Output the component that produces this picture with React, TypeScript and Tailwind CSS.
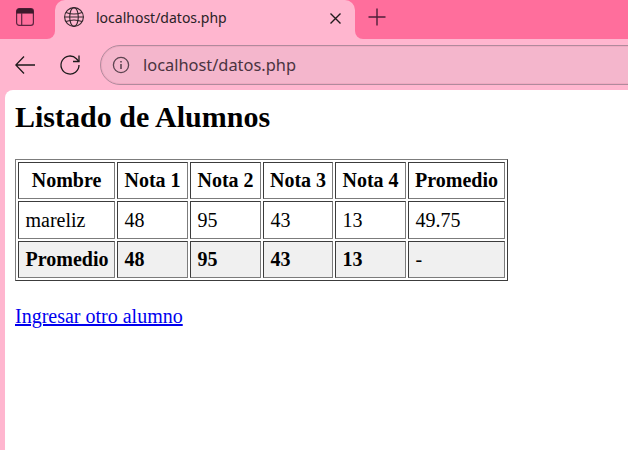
import React from "react";

const inset = "border border-[#7c7c7c] border-t-[#3c3c3c] border-l-[#3c3c3c]";

const Th = ({ w, children }: { w: string; children: React.ReactNode }) => (
  <th className={`${w} ${inset} p-0 text-center font-bold`}>{children}</th>
);

const rowCell = `${inset} px-[6.5px] py-0 text-left`;
const footCell = `${rowCell} bg-[#f0f0f0]`;

export default function App() {
  return (
    <div className="w-[628px] h-[450px] overflow-hidden bg-[#ffb6cf] flex flex-col font-['Liberation_Serif',serif]">
      {/* tab strip */}
      <div className="h-[39px] shrink-0 flex items-stretch">
        <div className="w-[55px] pr-[5px] pb-[5px] rounded-br-[8px] bg-[#ff6e9c] flex items-center justify-center">
          <svg width="18" height="18" viewBox="0 0 18 18" fill="none" stroke="#5e2540" strokeWidth="1.2">
            <rect x="0.6" y="0.6" width="16.8" height="16.8" rx="2.6" />
            <path d="M0.8 3.4a2.6 2.6 0 0 1 2.6-2.6h11.2a2.6 2.6 0 0 1 2.6 2.6v1.8H0.8z" fill="#3d1a2b" stroke="#3d1a2b" strokeWidth="0.6" />
            <path d="M5.7 5v12.4" />
          </svg>
        </div>
        <div className="w-[300px] bg-[#ff6e9c]">
          <div className="h-full bg-[#ffb6cf] rounded-t-[10px] flex items-center pl-[9px] pr-[14px] pb-[5px]">
            <svg width="20" height="20" viewBox="0 0 20 20" fill="none" stroke="#33262c" strokeWidth="1.1">
              <circle cx="10" cy="10" r="9.4" />
              <ellipse cx="10" cy="10" rx="4.3" ry="9.4" />
              <path d="M2 5.4c4.6 1.9 11.4 1.9 16 0M2 14.6c4.6-1.9 11.4-1.9 16 0M0.6 10h18.8" />
            </svg>
            <span className="ml-[12px] flex-1 text-[14px] text-[#2a2226] font-['Noto_Sans',sans-serif]">localhost/datos.php</span>
            <svg width="11" height="11" viewBox="0 0 11 11" stroke="#1f1a1c" strokeWidth="1.4" fill="none" className="mt-[3px]">
              <path d="M0.5 0.5l10 10M10.5 0.5l-10 10" />
            </svg>
          </div>
        </div>
        <div className="flex-1 rounded-bl-[8px] bg-[#ff6e9c] pl-[13px] pb-[5px] flex items-center">
          <svg width="18" height="18" viewBox="0 0 18 18" stroke="#4f1f38" strokeWidth="1.4" fill="none">
            <path d="M9 0.5v17M0.5 9h17" />
          </svg>
        </div>
      </div>
      {/* toolbar */}
      <div className="h-[51px] shrink-0 flex items-center">
        <div className="w-[50px] flex justify-center">
          <svg width="20" height="18" viewBox="0 0 20 18" stroke="#1d1a1b" strokeWidth="1.3" fill="none">
            <path d="M20 9H0.8M9 0.5L0.8 9 9 17.5" />
          </svg>
        </div>
        <div className="w-[40px] flex justify-center">
          <svg width="22" height="22" viewBox="0 0 22 22" stroke="#1d1a1b" strokeWidth="1.3" fill="none">
            <path d="M20 11a9 9 0 1 1-2.6-6.3L20 7.5" />
            <path d="M20 1.5v6h-6" />
          </svg>
        </div>
        <div className="ml-[10px] self-start mt-[6px] h-[40px] flex-1 -mr-[40px] rounded-full border border-[#b08a9c] bg-[#f4b6cc] flex items-center pl-[11px] shadow-[inset_0_0_0_1px_#efa9c1]">
          <svg width="18" height="18" viewBox="0 0 18 18" fill="none" stroke="#5c4450" strokeWidth="1.3">
            <circle cx="9" cy="9" r="7.6" />
            <path d="M9 8v5" strokeWidth="1.6" />
            <path d="M9 5v1.6" strokeWidth="1.6" />
          </svg>
          <span className="ml-[13px] text-[16.4px] text-[#4a3340] font-['Noto_Sans',sans-serif]">localhost/datos.php</span>
        </div>
      </div>
      {/* page */}
      <div className="flex-1 ml-[5px] bg-white rounded-tl-[8px] pl-[10px] text-black text-[20px] leading-[23px]">
        <h1 className="mt-[10px] text-[30px] leading-[34px] font-bold">Listado de Alumnos</h1>
        <table className="mt-[25px] table-fixed border-separate border-spacing-[2px] border border-[#3c3c3c] border-t-[#7c7c7c] border-l-[#7c7c7c] w-[493px]">
          <thead>
            <tr className="h-[37px]">
              <Th w="w-[97px]">Nombre</Th>
              <Th w="w-[71px]">Nota 1</Th>
              <Th w="w-[71px]">Nota 2</Th>
              <Th w="w-[70px]">Nota 3</Th>
              <Th w="w-[71px]">Nota 4</Th>
              <Th w="w-[97px]">Promedio</Th>
            </tr>
          </thead>
          <tbody>
            <tr className="h-[38px]">
              <td className={rowCell}>mareliz</td>
              <td className={rowCell}>48</td>
              <td className={rowCell}>95</td>
              <td className={rowCell}>43</td>
              <td className={rowCell}>13</td>
              <td className={rowCell}>49.75</td>
            </tr>
            <tr className="h-[37px]">
              <td className={`${footCell} font-bold`}>Promedio</td>
              <td className={`${footCell} font-bold`}>48</td>
              <td className={`${footCell} font-bold`}>95</td>
              <td className={`${footCell} font-bold`}>43</td>
              <td className={`${footCell} font-bold`}>13</td>
              <td className={footCell}>-</td>
            </tr>
          </tbody>
        </table>
        <a href="#" className="block mt-[24px] w-fit text-[#0000ee] underline">Ingresar otro alumno</a>
      </div>
    </div>
  );
}
